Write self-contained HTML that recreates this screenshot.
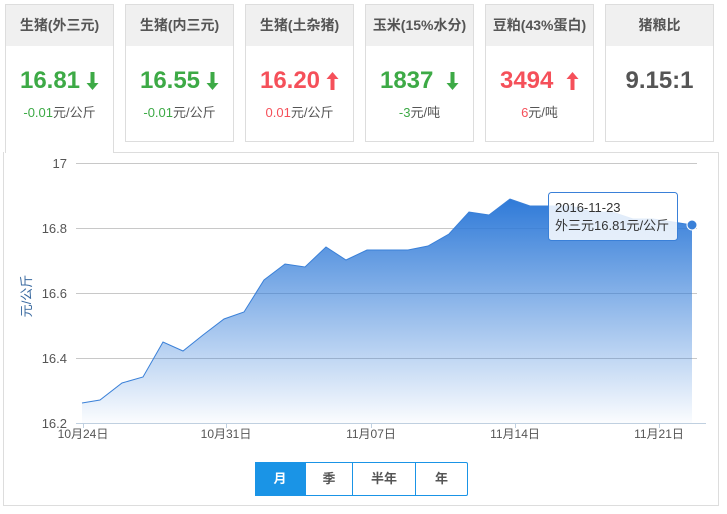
<!DOCTYPE html>
<html><head><meta charset="utf-8"><style>
body{margin:0;width:727px;height:514px;background:#fff;font-family:"Liberation Sans","Noto Sans CJK SC",sans-serif;position:relative;overflow:hidden}
.card{position:absolute;top:4px;width:107px;height:136px;border:1px solid #ddd;background:#fff;text-align:center}
.card .h{height:41px;background:#f0f0f0;line-height:41px;font-size:14px;font-weight:bold;color:#555}
.card .v{margin-top:20px;font-size:24px;font-weight:bold;height:30px;line-height:30px}
.card .v svg{vertical-align:-2px;margin-left:6px}
.card .c{margin-top:6px;font-size:13px;color:#555}
.g{color:#3daa46}.r{color:#f5505a}
.panel{position:absolute;left:3px;top:152px;width:714px;height:353px;border:1px solid #ddd;border-top:none}
.ptop{position:absolute;left:113px;top:152px;width:605px;height:1px;background:#ddd}
.btns{position:absolute;left:255px;top:462px;height:32px;width:211px;border:1px solid #1a94e6;border-radius:2px;display:flex;font-size:13px;font-weight:bold;color:#555}
.btns div{text-align:center;line-height:32px;border-left:1px solid #1a94e6}
</style></head><body>
<div class="panel"></div><div class="ptop"></div>
<div class="card" style="left:5px;height:148px;border-bottom:none"><div class="h">生猪(外三元)</div><div class="v g">16.81<svg width="13" height="18" viewBox="0 0 13 18"><path d="M4.5 0h4v11h4l-6 7-6-7h4z" fill="#3daa46"/></svg></div><div class="c"><span class="g">-0.01</span>元/公斤</div></div>
<div class="card" style="left:125px"><div class="h">生猪(内三元)</div><div class="v g">16.55<svg width="13" height="18" viewBox="0 0 13 18"><path d="M4.5 0h4v11h4l-6 7-6-7h4z" fill="#3daa46"/></svg></div><div class="c"><span class="g">-0.01</span>元/公斤</div></div>
<div class="card" style="left:245px"><div class="h">生猪(土杂猪)</div><div class="v r">16.20<svg width="13" height="18" viewBox="0 0 13 18"><path d="M4.5 18h4V7h4l-6-7-6 7h4z" fill="#f5505a"/></svg></div><div class="c"><span class="r">0.01</span>元/公斤</div></div>
<div class="card" style="left:365px"><div class="h">玉米(15%水分)</div><div class="v g">1837 <svg width="13" height="18" viewBox="0 0 13 18"><path d="M4.5 0h4v11h4l-6 7-6-7h4z" fill="#3daa46"/></svg></div><div class="c"><span class="g">-3</span>元/吨</div></div>
<div class="card" style="left:485px"><div class="h">豆粕(43%蛋白)</div><div class="v r">3494 <svg width="13" height="18" viewBox="0 0 13 18"><path d="M4.5 18h4V7h4l-6-7-6 7h4z" fill="#f5505a"/></svg></div><div class="c"><span class="r">6</span>元/吨</div></div>
<div class="card" style="left:605px"><div class="h">猪粮比</div><div class="v" style="color:#555">9.15:1</div></div>
<svg style="position:absolute;left:0;top:0" width="727" height="514">
<defs><linearGradient id="gr" x1="0" y1="0" x2="0" y2="1"><stop offset="0" stop-color="#2f7ad8"/><stop offset="1" stop-color="#2f7ad8" stop-opacity="0.02"/></linearGradient></defs>
<g stroke="#c8c8c8" stroke-width="1"><line x1="76" y1="163.5" x2="697" y2="163.5"/><line x1="76" y1="228.5" x2="697" y2="228.5"/><line x1="76" y1="293.5" x2="697" y2="293.5"/><line x1="76" y1="358.5" x2="697" y2="358.5"/></g>
<polygon fill="url(#gr)" points="82,403 100,400 122,383 143,377 163,342 183,351 203,335 224,319 244,312 264,280 285,264 305,267 326,247 346,260 367,250 387,250 408,250 428,246 449,234 469,212 489,215 510,199 530,206 551,206 571,206 592,212 612,212 633,219 653,219 673,222 692,225 692,423 82,423"/>
<polyline fill="none" stroke="#3a80d8" stroke-width="1" points="82,403 100,400 122,383 143,377 163,342 183,351 203,335 224,319 244,312 264,280 285,264 305,267 326,247 346,260 367,250 387,250 408,250 428,246 449,234 469,212 489,215 510,199 530,206 551,206 571,206 592,212 612,212 633,219 653,219 673,222 692,225"/>
<line x1="76" y1="423.5" x2="706" y2="423.5" stroke="#c0d0e0"/>
<g stroke="#c0d0e0"><line x1="83.5" y1="423" x2="83.5" y2="428"/><line x1="226.5" y1="423" x2="226.5" y2="428"/><line x1="371.5" y1="423" x2="371.5" y2="428"/><line x1="515.5" y1="423" x2="515.5" y2="428"/><line x1="659.5" y1="423" x2="659.5" y2="428"/></g>
<g font-size="13" fill="#555" text-anchor="end"><text x="67" y="168">17</text><text x="67" y="233">16.8</text><text x="67" y="298">16.6</text><text x="67" y="363">16.4</text><text x="67" y="428">16.2</text></g>
<g font-size="12" fill="#555" text-anchor="middle"><text x="83" y="438">10月24日</text><text x="226" y="438">10月31日</text><text x="371" y="438">11月07日</text><text x="515" y="438">11月14日</text><text x="659" y="438">11月21日</text></g>
<text transform="translate(31,296) rotate(-90)" font-size="13" fill="#3a6aa0" text-anchor="middle">元/公斤</text>
<rect x="548.5" y="192.5" width="129" height="48" rx="3" fill="#fff" fill-opacity="0.85" stroke="#3a80d8"/>
<text x="555" y="212" font-size="13" fill="#333">2016-11-23</text>
<text x="555" y="230" font-size="13" fill="#333">外三元16.81元/公斤</text>
<circle cx="692" cy="225" r="5" fill="#3a80d8" stroke="#fff" stroke-width="1"/>
</svg>
<div class="btns"><div style="width:50px;background:#1a94e6;color:#fff;border:none;margin:-1px 0 -1px -1px;line-height:34px">月</div><div style="width:46px">季</div><div style="width:62px">半年</div><div style="flex:1">年</div></div>
</body></html>
